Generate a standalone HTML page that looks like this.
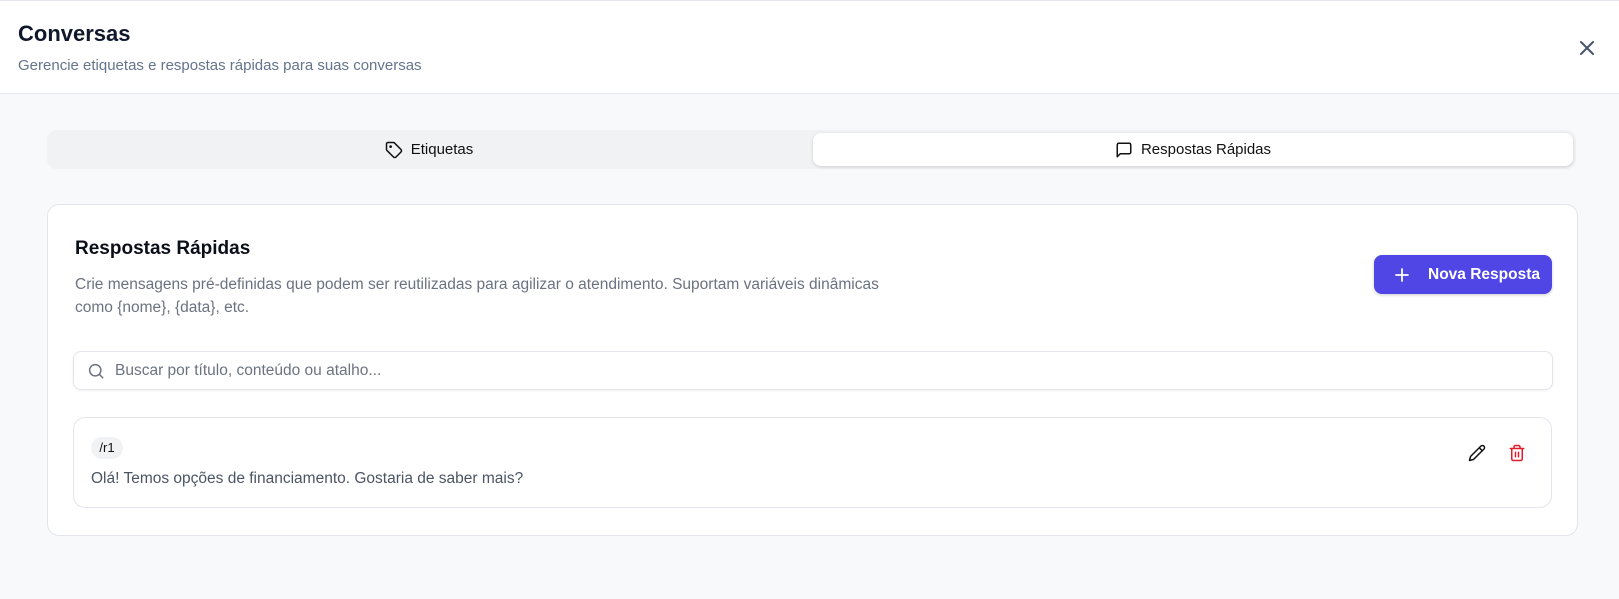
<!DOCTYPE html>
<html><head><meta charset="utf-8"><style>
*{box-sizing:border-box;margin:0;padding:0}
body{width:1619px;height:599px;background:#f8f9fb;font-family:"Liberation Sans",sans-serif;position:relative;overflow:hidden;color:#111827}
.hdr{position:absolute;left:0;top:0;width:1619px;height:94px;background:#fff;border-bottom:1px solid #e3e6ec;border-top:1px solid #e3e6ec}
.hdr h1{position:absolute;left:18px;top:20px;font-size:22px;font-weight:700;color:#0f172a}
.hdr p{position:absolute;left:18px;top:56px;font-size:15px;color:#64748b}
.x{position:absolute;left:1578px;top:38px}
.tabs{position:absolute;left:47px;top:130px;width:1529px;height:39px;background:#f1f2f4;border-radius:10px}
.tab{position:absolute;top:3px;height:33px;display:flex;align-items:center;justify-content:center;gap:8px;font-size:15px;color:#111}
.t1{left:0;width:764px}
.t2{left:766px;width:760px;background:#fff;border-radius:8px;box-shadow:0 1px 3px rgba(0,0,0,.15)}
.card{position:absolute;left:47px;top:204px;width:1531px;height:332px;background:#fff;border:1px solid #e3e5ea;border-radius:12px}
.card h2{position:absolute;left:27px;top:33px;font-size:19px;font-weight:700;color:#0b0f19}
.card .d{position:absolute;left:27px;top:68px;width:845px;font-size:15.5px;line-height:23px;color:#6b7280}
.btn{position:absolute;left:1326px;top:50px;width:178px;height:39px;background:#4f46e5;border-radius:8px;color:#fff;font-size:15.5px;font-weight:600;display:flex;align-items:center;padding-left:20px;gap:18px;box-shadow:0 1px 3px rgba(0,0,0,.2)}
.search{position:absolute;left:25px;top:146px;width:1480px;height:39px;border:1px solid #e3e5ea;border-radius:8px;box-shadow:0 1px 2px rgba(0,0,0,.06);display:flex;align-items:center;padding-left:13px;gap:10px;font-size:15.5px;color:#6b7280}
.item{position:absolute;left:25px;top:212px;width:1479px;height:91px;border:1px solid #e3e5ea;border-radius:12px}
.badge{position:absolute;left:17px;top:19px;width:32px;height:22px;border-radius:11px;background:#f1f2f4;font-size:13px;color:#111;text-align:center;line-height:22px}
.msg{position:absolute;left:17px;top:52px;font-size:15.5px;color:#4b5563}
.ic{position:absolute;top:26px}
</style></head><body>
<div class="hdr"><h1>Conversas</h1><p>Gerencie etiquetas e respostas rápidas para suas conversas</p>
<svg class="x" width="18" height="18" viewBox="0 0 18 18"><path d="M3 3L15 15M15 3L3 15" stroke="#475569" stroke-width="2" stroke-linecap="round"/></svg></div>
<div class="tabs">
<div class="tab t1"><svg width="18" height="18" viewBox="0 0 24 24" fill="none" stroke="#111" stroke-width="2" stroke-linejoin="round"><path d="M12.6 2.6A2 2 0 0 0 11.2 2H4a2 2 0 0 0-2 2v7.2a2 2 0 0 0 .6 1.4l8.7 8.7a2.4 2.4 0 0 0 3.4 0l6.6-6.6a2.4 2.4 0 0 0 0-3.4z"/><circle cx="7.5" cy="7.5" r=".8" fill="#111"/></svg>Etiquetas</div>
<div class="tab t2"><svg width="18" height="18" viewBox="0 0 24 24" fill="none" stroke="#111" stroke-width="2" stroke-linejoin="round"><path d="M21 15a2 2 0 0 1-2 2H7l-4 4V5a2 2 0 0 1 2-2h14a2 2 0 0 1 2 2z"/></svg>Respostas Rápidas</div>
</div>
<div class="card">
<h2>Respostas Rápidas</h2>
<div class="d">Crie mensagens pré-definidas que podem ser reutilizadas para agilizar o atendimento. Suportam variáveis dinâmicas como {nome}, {data}, etc.</div>
<div class="btn"><svg width="16" height="16" viewBox="0 0 16 16"><path d="M8 2v12M2 8h12" stroke="#fff" stroke-width="1.8" stroke-linecap="round"/></svg>Nova Resposta</div>
<div class="search"><svg width="18" height="18" viewBox="0 0 24 24" fill="none" stroke="#6b7280" stroke-width="2" stroke-linecap="round"><circle cx="11" cy="11" r="7.5"/><path d="M21 21l-4.3-4.3"/></svg>Buscar por título, conteúdo ou atalho...</div>
<div class="item"><div class="badge">/r1</div><div class="msg">Olá! Temos opções de financiamento. Gostaria de saber mais?</div>
<svg class="ic" style="left:1394px" width="18" height="18" viewBox="0 0 24 24" fill="none" stroke="#111" stroke-width="2" stroke-linejoin="round"><path d="M21.2 6.8a2.8 2.8 0 0 0-4-4L3.8 16.2a2 2 0 0 0-.5.8L2 22l5-1.3a2 2 0 0 0 .8-.5z"/><path d="M15 5l4 4"/></svg>
<svg class="ic" style="left:1434px" width="18" height="18" viewBox="0 0 24 24" fill="none" stroke="#e11d2e" stroke-width="2" stroke-linecap="round" stroke-linejoin="round"><path d="M3 6h18M19 6v14a2 2 0 0 1-2 2H7a2 2 0 0 1-2-2V6M8 6V4a2 2 0 0 1 2-2h4a2 2 0 0 1 2 2v2M10 11v6M14 11v6"/></svg>
</div>
</div>
</body></html>
